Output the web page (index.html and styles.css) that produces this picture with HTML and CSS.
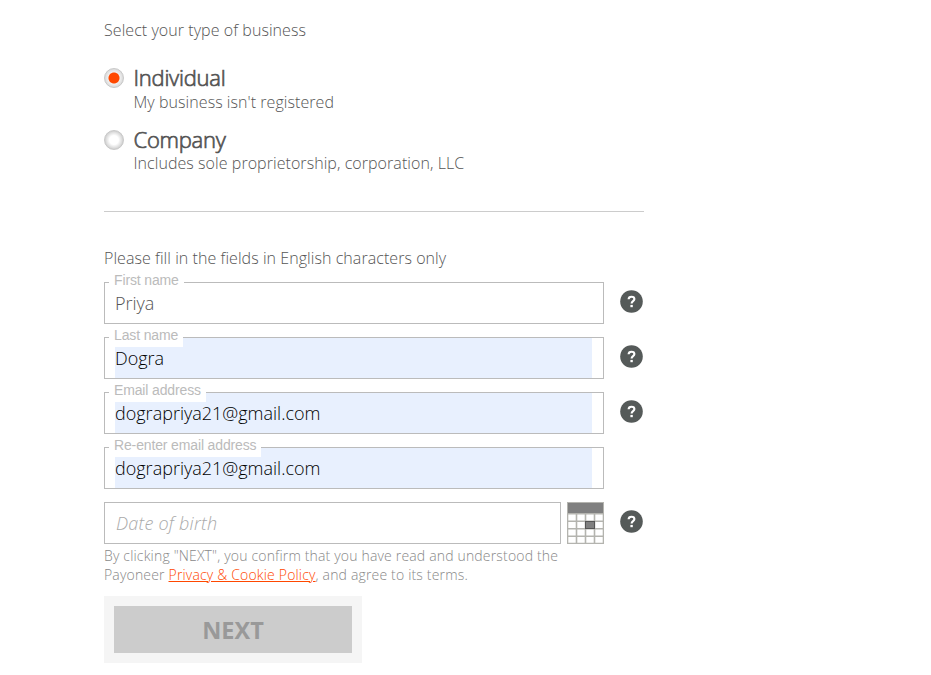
FILE: index.html
```
<!DOCTYPE html>
<html lang="en">
<head>
    <meta charset="UTF-8">
    <title>Sign up</title>
    <link rel="stylesheet" href="styles.css">
</head>
<body>
<svg width="0" height="0" class="defs">
    <symbol id="help" viewBox="0 0 23 23">
        <circle cx="11.5" cy="11.5" r="11.3" fill="#555a59"/>
        <path d="M8.6 9.2C8.7 7.3 9.9 6.7 11.5 6.7c1.8 0 2.9.9 2.9 2.4 0 2.1-2.8 2-2.8 4.4" fill="none" stroke="#fff" stroke-width="2.1"/>
        <rect x="10.4" y="14.9" width="2.4" height="2.3" fill="#fff"/>
    </symbol>
</svg>

<form class="signup">
    <p class="intro">Select your type of business</p>

    <div class="types">
        <label class="type">
            <span class="radio checked"></span>
            <span class="type-text">
                <span class="type-name">Individual</span>
                <span class="type-desc">My business isn't registered</span>
            </span>
        </label>
        <label class="type">
            <span class="radio"></span>
            <span class="type-text">
                <span class="type-name">Company</span>
                <span class="type-desc">Includes sole proprietorship, corporation, LLC</span>
            </span>
        </label>
    </div>

    <p class="fill-note">Please fill in the fields in English characters only</p>

    <div class="rows">
        <div class="row">
            <div class="field">
                <label for="first">First name</label>
                <input id="first" type="text" value="Priya">
            </div>
            <svg class="help"><use href="#help"/></svg>
        </div>
        <div class="row">
            <div class="field filled">
                <label for="last">Last name</label>
                <input id="last" type="text" value="Dogra">
            </div>
            <svg class="help"><use href="#help"/></svg>
        </div>
        <div class="row">
            <div class="field filled">
                <label for="email">Email address</label>
                <input id="email" type="text" value="dograpriya21@gmail.com">
            </div>
            <svg class="help"><use href="#help"/></svg>
        </div>
        <div class="row">
            <div class="field filled">
                <label for="email2">Re-enter email address</label>
                <input id="email2" type="text" value="dograpriya21@gmail.com">
            </div>
        </div>
        <div class="row">
            <div class="field date">
                <input type="text" placeholder="Date of birth">
            </div>
            <svg class="calendar" width="37" height="42" viewBox="0 0 37 42">
                <rect width="37" height="42" fill="#b4b4af"/>
                <rect x="1" y="1" width="35" height="10" fill="#808080"/>
                <path d="M1.3 12.5h7.4v6H1.3zM10.3 12.5h7.4v6h-7.4zM19.3 12.5h7.4v6h-7.4zM28.3 12.5h7.4v6h-7.4zM1.3 20h7.4v6H1.3zM10.3 20h7.4v6h-7.4zM28.3 20h7.4v6h-7.4zM1.3 27.5h7.4v6H1.3zM10.3 27.5h7.4v6h-7.4zM19.3 27.5h7.4v6h-7.4zM28.3 27.5h7.4v6h-7.4zM1.3 35h7.4v5.7H1.3zM10.3 35h7.4v5.7h-7.4zM19.3 35h7.4v5.7h-7.4zM28.3 35h7.4v5.7h-7.4z" fill="#fff"/>
                <rect x="18.5" y="19.5" width="9" height="7" fill="#808080" stroke="#555"/>
            </svg>
            <svg class="help"><use href="#help"/></svg>
        </div>
    </div>

    <p class="terms">By clicking "NEXT", you confirm that you have read and understood the<br>Payoneer <a href="#">Privacy &amp; Cookie Policy</a>, and agree to its terms.</p>

    <div class="actions">
        <button type="button" disabled>NEXT</button>
    </div>
</form>
</body>
</html>
```
FILE: styles.css
```
body, p, form, input, button {
    margin: 0;
    padding: 0;
}

body {
    background: #fff;
    color: #555;
    font-family: "Open Sans", sans-serif;
    font-weight: 300;
    font-size: 16px;
    letter-spacing: 0.06px;
    overflow: hidden;
}

.defs {
    display: block;
}

.signup {
    width: 540px;
    margin-left: 104px;
    padding-top: 19px;
}

.intro, .fill-note {
    line-height: 22px;
}

.types {
    height: 146px;
    padding-top: 24px;
    border-bottom: 1px solid #ccc;
}

.type {
    display: flex;
    height: 62px;
}

.radio {
    box-sizing: border-box;
    width: 20px;
    height: 20px;
    margin: 3px 9.5px 0 0;
    border: 1px solid #c8c8c8;
    border-radius: 50%;
    background: radial-gradient(circle, #fff 35%, #ccc 75%);
}

.radio.checked {
    background: radial-gradient(circle, #ff4800 5px, #f0f0f0 6px, #d4d4d4 10px);
}

.type-text {
    display: flex;
    flex-direction: column;
}

.type-name {
    font-size: 22px;
    line-height: 24px;
    letter-spacing: -0.25px;
    -webkit-text-stroke: 0.7px #555;
}

.type-desc {
    line-height: 26px;
}

.type + .type .type-desc {
    line-height: 24px;
}

.fill-note {
    margin-top: 35px;
}

.rows {
    display: grid;
    gap: 13px;
    margin-top: 13px;
}

.row {
    display: flex;
    height: 42px;
}

.field {
    position: relative;
    box-sizing: border-box;
    display: flex;
    width: 500px;
    padding: 0 11px 0 10px;
    border: 1px solid #bbb;
}

.field label {
    position: absolute;
    left: 4px;
    top: -11px;
    padding: 0 5px 4px;
    background: #fff;
    color: #bbb;
    font: 14px/16px "Liberation Sans", Arial, sans-serif;
    letter-spacing: -0.14px;
}

.field input {
    flex: 1;
    min-width: 0;
    border: 0;
    background: #fff;
    color: #555;
    font: 300 18px "Open Sans", sans-serif;
}

.field.filled input {
    background: #e8f0fe;
    color: #000;
}

.field input::placeholder {
    color: #aaa;
    font-style: italic;
}

.field.date {
    width: 457px;
}

.field.date input {
    padding-left: 1px;
    letter-spacing: 0.22px;
}

.calendar {
    margin-left: 6px;
}

.help {
    width: 23px;
    height: 23px;
    margin: 8px 0 0 16px;
}

.terms {
    width: 480px;
    margin-top: 2px;
    color: #888;
    font-size: 14px;
    line-height: 19px;
    letter-spacing: 0.17px;
}

.terms a {
    color: #ff4800;
}

.actions {
    box-sizing: border-box;
    display: flex;
    width: 258px;
    height: 67px;
    margin-top: 12px;
    padding: 10px;
    background: #f5f5f5;
}

.actions button {
    flex: 1;
    border: 0;
    background: #ccc;
    color: #999;
    font: bold 23.5px "Open Sans", sans-serif;
}
```
